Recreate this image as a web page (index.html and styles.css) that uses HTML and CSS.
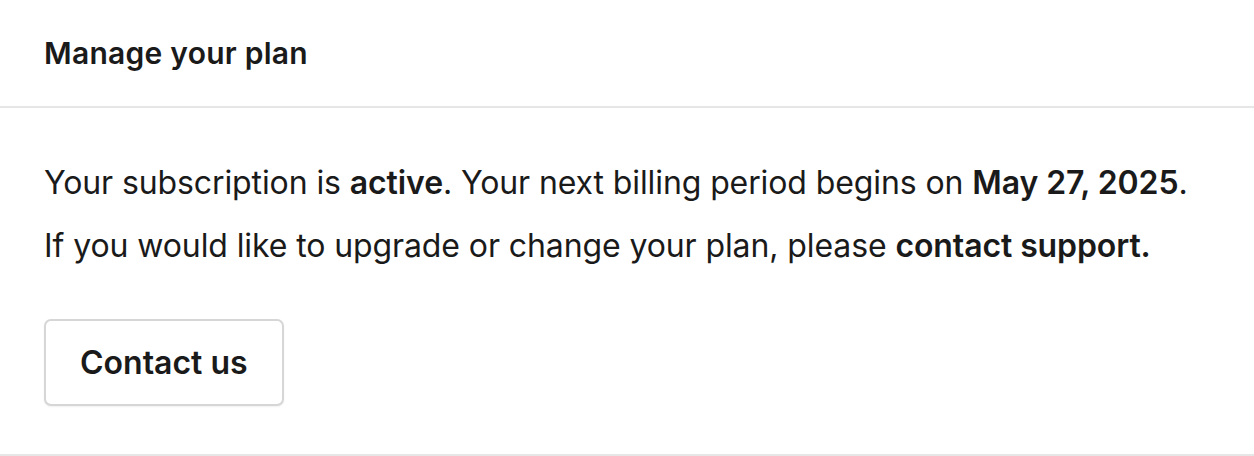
FILE: index.html
```html
<!DOCTYPE html>
<html lang="en">
<head>
    <meta charset="UTF-8">
    <meta name="viewport" content="width=device-width, initial-scale=1.0">
    <title>Manage your plan</title>
    <link rel="stylesheet" href="styles.css">
</head>
<body>
    <div class="panel">
        <div class="panel-header">
            <h2>Manage your plan</h2>
        </div>

        <!-- subscription status -->
        <div class="panel-body">
            <p>Your subscription is <strong>active</strong>. Your next billing period begins on <strong>May 27, 2025</strong>.</p>
            <p>If you would like to upgrade or change your plan, please <strong>contact support.</strong></p>
            <button class="btn">Contact us</button>
        </div>
    </div>
</body>
</html>
```

FILE: styles.css
```css
body {
    margin: 0;
    font-family: Inter, "Noto Sans", Arial, sans-serif;
    color: #1a1a1a;
    background-color: #fff;
}
.panel {
    border-bottom: 2px solid #e6e6e6;
}
.panel-header {
    height: 106px;
    padding: 0 44px;
    display: flex;
    align-items: center;
    border-bottom: 2px solid #e6e6e6;
}
.panel-header h2 {
    margin: 0;
    font-size: 30px;
    font-weight: 600;
    letter-spacing: 0.25px;
}
.panel-body {
    padding: 55px 44px 48px;
}
.panel-body p {
    margin: 0 0 23px;
    font-size: 32px;
    line-height: 40px;
    letter-spacing: -0.1px;
}
.panel-body p strong {
    font-weight: 600;
}
.btn {
    margin-top: 30px;
    height: 87px;
    padding: 0 34px;
    font-family: inherit;
    font-size: 32px;
    font-weight: 600;
    color: #1a1a1a;
    background-color: #fff;
    border: 2px solid #d6d6d6;
    border-radius: 7px;
    box-shadow: 0 1px 2px rgba(0, 0, 0, 0.06);
    cursor: pointer;
}
```
